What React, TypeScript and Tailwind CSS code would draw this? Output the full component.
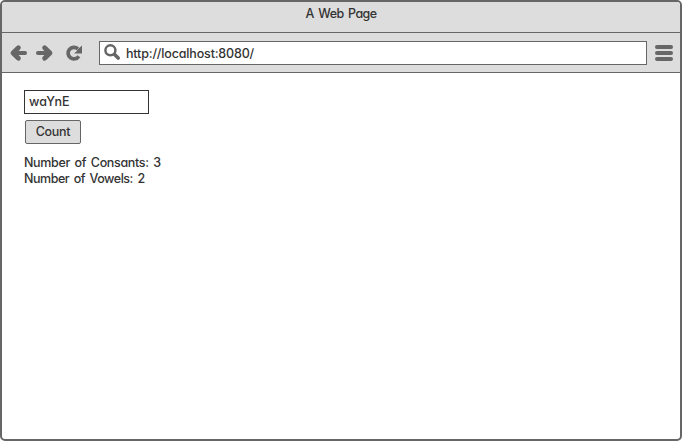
import { useState } from "react";

const ink = "#666666";

function ArrowLeft({ className = "" }: { className?: string }) {
  return (
    <svg className={className} width="18" height="18" viewBox="0 0 18 18" fill="none" stroke={ink} strokeLinejoin="round">
      <path d="M9.4 3.7 L4 9 L9.4 14.3" strokeWidth="4.8" strokeLinecap="round" />
      <path d="M5 9 H16" strokeWidth="4" strokeLinecap="round" />
    </svg>
  );
}

function Reload() {
  return (
    <svg width="18" height="18" viewBox="0 0 18 18" fill="none">
      <path d="M12.9 4.9 A5.8 5.8 0 1 0 13.8 12.2" stroke={ink} strokeWidth="3.7" />
      <path d="M17 1.6 V9.6 H9 L11.4 7.4 L12.8 5.2 Z" fill={ink} />
    </svg>
  );
}

function Search() {
  return (
    <svg width="17" height="17" viewBox="0 0 17 17" fill="none" stroke={ink}>
      <circle cx="6.4" cy="6.3" r="5" strokeWidth="2.5" />
      <path d="M10.6 10.4 L14.2 14" strokeWidth="3.6" strokeLinecap="round" />
    </svg>
  );
}

export default function App() {
  const [word, setWord] = useState("waYnE");
  return (
    <div className="flex h-[441px] w-[682px] flex-col overflow-hidden rounded-[5px] border-2 border-[#666] bg-white font-[Inter,sans-serif] text-[12.5px] leading-4 font-medium text-[#333] [font-feature-settings:'cv11']">
      <header className="flex h-[31px] shrink-0 justify-center border-b border-[#666] bg-[#ddd] pt-[4px]">
        <span className="tracking-[-0.6px] [word-spacing:1.8px]">A Web Page</span>
      </header>
      <nav className="flex h-10 shrink-0 items-center border-b border-[#666] bg-[#ddd] pl-[7px] pr-[7px]">
        <ArrowLeft />
        <ArrowLeft className="ml-[9px] -scale-x-100" />
        <div className="ml-[11px]">
          <Reload />
        </div>
        <div className="ml-4 flex h-6 w-[548px] items-center border border-[#666] bg-white pl-1">
          <Search />
          <span className="ml-[5px] pt-[2px] tracking-[-0.16px]">http://localhost:8080/</span>
        </div>
        <div className="ml-2 flex flex-col gap-[2px] pt-px">
          <div className="h-1 w-[18px] rounded-full bg-[#666]" />
          <div className="h-1 w-[18px] rounded-full bg-[#666]" />
          <div className="h-1 w-[18px] rounded-full bg-[#666]" />
        </div>
      </nav>
      <main className="flex flex-col items-start pl-[22px] pt-[17px]">
        <input
          value={word}
          onChange={(e) => setWord(e.target.value)}
          className="h-6 w-[125px] border border-[#333] pb-px pl-1 outline-none"
        />
        <button className="mt-[6px] ml-px h-6 w-14 rounded-[2px] border border-[#666] bg-[#ddd] pb-px tracking-[-0.3px]">Count</button>
        <p className="mt-[11px] tracking-[-0.35px] [word-spacing:1.7px]">Number of Consants: 3</p>
        <p className="tracking-[-0.48px] [word-spacing:1.7px]">Number of Vowels: 2</p>
      </main>
    </div>
  );
}
